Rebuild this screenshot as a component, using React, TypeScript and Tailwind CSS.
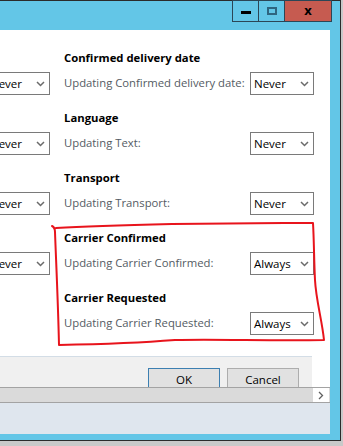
import React from "react";

const groups = [
  { title: "Confirmed delivery date", label: "Updating Confirmed delivery date:", value: "Never", left: true },
  { title: "Language", label: "Updating Text:", value: "Never", left: true },
  { title: "Transport", label: "Updating Transport:", value: "Never", left: true },
  { title: "Carrier Confirmed", label: "Updating Carrier Confirmed:", value: "Always", left: true },
  { title: "Carrier Requested", label: "Updating Carrier Requested:", value: "Always", left: false },
];

function Dropdown({ value }: { value: string }) {
  return (
    <div className="flex h-[23px] w-[64px] shrink-0 items-center justify-between border border-[#7a7a7a] bg-white pl-[3px] pr-[4px] text-[11.5px] text-black">
      <span>{value}</span>
      <svg width="9" height="6" viewBox="0 0 9 6">
        <path d="M1 1 L4.5 4.5 L8 1" fill="none" stroke="#6b6b6b" strokeWidth="1.5" />
      </svg>
    </div>
  );
}

export default function App() {
  return (
    <div className="relative h-[446px] w-[343px] overflow-hidden bg-[#c9c9c9] font-['Open_Sans','Noto_Sans',sans-serif]">
      <div className="flex h-[441px] w-[341px] flex-col border-r border-b border-[#2b2b2b] bg-[#63c6e7]">
        {/* title bar */}
        <div className="flex h-[30px] shrink-0 items-start justify-end border-t border-[#2b2b2b] pr-[8px]">
          <div className="-mt-px flex h-[22px] border border-[#2b4656]">
            <div className="flex w-[26px] items-center justify-center border-r border-[#2b4656]">
              <div className="mt-[3px] h-[3px] w-[10px] bg-black" />
            </div>
            <div className="flex w-[26px] items-center justify-center border-r border-[#2b4656]">
              <div className="h-[8px] w-[10px] border-2 border-[#2e6580]" />
            </div>
            <div className="flex w-[46px] items-center justify-center bg-[#c65b50] pb-[2px] text-[13px] font-bold leading-none text-black">
              x
            </div>
          </div>
        </div>
        {/* client area */}
        <div className="flex w-[330px] flex-1 flex-col bg-white">
          <div className="h-[326px] shrink-0 overflow-hidden pt-[18px]">
            <div className="flex flex-col gap-[13px]">
              {groups.map((g) => (
                <div key={g.title} className="grid grid-cols-[50px_250px] gap-x-[14px]">
                  <div className="-ml-[14px] flex flex-col justify-end">
                    {g.left && <Dropdown value="Never" />}
                  </div>
                  <div className="flex flex-col">
                    <div className="flex h-[20px] items-center whitespace-nowrap text-[11.3px] font-bold text-black">{g.title}</div>
                    <div className="mt-[4px] flex items-center justify-between">
                      <span className="whitespace-nowrap text-[11.3px] text-[#545b63]">{g.label}</span>
                      <Dropdown value={g.value} />
                    </div>
                  </div>
                </div>
              ))}
            </div>
          </div>
          <div className="h-px w-[312px] bg-[#d3dde6]" />
          <div className="flex h-[30px] shrink-0">
            <div className="flex w-[312px] items-start justify-end gap-[7px] overflow-hidden bg-[#f0f0f0] pt-[11px] pr-[13px]">
              <button className="flex h-[23px] w-[72px] shrink-0 items-center justify-center border border-[#3c7fb1] bg-[#e1e1e1] text-[11.5px] text-black">
                OK
              </button>
              <button className="flex h-[23px] w-[72px] shrink-0 items-center justify-center border border-[#adadad] bg-[#e1e1e1] text-[11.5px] text-black">
                Cancel
              </button>
            </div>
            <div className="flex-1 bg-white" />
          </div>
          <div className="flex h-[16px] shrink-0 border-t border-b border-[#a3a3a3] bg-[#dadada] pr-px">
            <div className="flex-1" />
            <div className="flex w-[16px] items-center justify-center bg-white">
              <svg width="6" height="9" viewBox="0 0 6 9">
                <path d="M1 1 L4.5 4.5 L1 8" fill="none" stroke="#606060" strokeWidth="1.3" />
              </svg>
            </div>
          </div>
          <div className="flex-1 bg-[#dfe6ee]" />
        </div>
        <div className="h-[6px] shrink-0" />
      </div>
      <svg className="pointer-events-none absolute left-0 top-0" width="343" height="446" viewBox="0 0 343 446">
        <path
          d="M52 226 C54 227 55 229 55 232 C56 260 58 300 59 345 C110 344 150 342 175 340 C220 339 270 341 324 340 C322 320 316 300 315 280 C314 260 314 240 313 223 C260 223 200 224 172 224 C130 225 90 226 56 228"
          fill="none"
          stroke="#e8141c"
          strokeWidth="2"
          strokeLinejoin="round"
          strokeLinecap="round"
        />
      </svg>
    </div>
  );
}
